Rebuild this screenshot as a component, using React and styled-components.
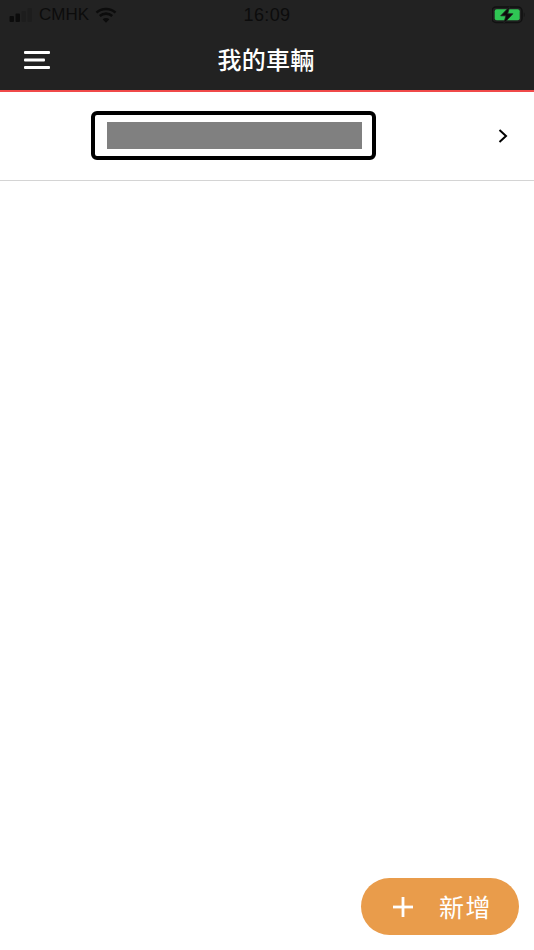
import React from 'react';
import styled, { createGlobalStyle } from 'styled-components';

const GlobalStyle = createGlobalStyle`
  html, body {
    margin: 0;
    padding: 0;
    background: #fff;
  }
  * {
    box-sizing: border-box;
  }
`;

const Page = styled.div`
  position: relative;
  width: 534px;
  height: 950px;
  overflow: hidden;
  background: #fff;
  font-family: "Liberation Sans", "Noto Sans CJK TC", sans-serif;
`;

const Header = styled.header`
  height: 92px;
  background: #222222;
  border-bottom: 2px solid #f04a4a;
`;

const StatusBar = styled.div`
  display: grid;
  grid-template-columns: 1fr auto 1fr;
  align-items: center;
  height: 30px;
  padding: 0 9px;
  color: #0c0c0c;
`;

const StatusLeft = styled.div`
  display: flex;
  align-items: center;
  gap: 6px;
  font-size: 17px;
`;

const Time = styled.div`
  font-size: 18px;
  letter-spacing: 0.4px;
`;

const StatusRight = styled.div`
  display: flex;
  justify-content: flex-end;
`;

const NavBar = styled.nav`
  display: grid;
  grid-template-columns: 1fr auto 1fr;
  align-items: center;
  height: 60px;
  padding: 0 26px 0 24px;
`;

const MenuButton = styled.button`
  display: flex;
  width: 28px;
  padding: 0;
  border: 0;
  background: none;
`;

const Title = styled.h1`
  margin: 0 0 4px;
  color: #fff;
  font-family: "Noto Sans CJK TC", sans-serif;
  font-size: 24px;
  font-weight: 500;
  letter-spacing: 0.2px;
`;

const VehicleRow = styled.div`
  display: flex;
  align-items: center;
  height: 89px;
  padding: 0 26px 1px 91px;
  border-bottom: 1px solid #d4d4d4;
`;

const PlateFrame = styled.div`
  display: flex;
  align-items: center;
  width: 285px;
  height: 49px;
  margin-right: auto;
  padding-left: 12px;
  border: 4px solid #000;
  border-radius: 6px;
`;

const PlateMask = styled.div`
  width: 255px;
  height: 27px;
  background: #808080;
`;

const AddButton = styled.button`
  position: absolute;
  right: 15px;
  bottom: 15px;
  display: flex;
  align-items: center;
  gap: 26px;
  width: 158px;
  height: 57px;
  padding: 0 0 0 32px;
  border: 0;
  border-radius: 29px;
  background: #e99c4b;
  color: #fff;
  font-family: "Noto Sans CJK TC", sans-serif;
  font-size: 25px;
  letter-spacing: 1.5px;
`;

const AddLabel = styled.span`
  padding-bottom: 2px;
`;

const SignalIcon = () => (
  <svg width="24" height="16" viewBox="0 0 24 16" fill="#0c0c0c">
    <rect x="0.5" y="9" width="4.5" height="6" rx="1" />
    <rect x="6.500" y="6.500" width="4.500" height="8.500" rx="1" />
    <rect x="12.500" y="4" width="4.500" height="11" rx="1" fillOpacity="0.18" />
    <rect x="18.500" y="1" width="4.500" height="14" rx="1" fillOpacity="0.18" />
  </svg>
);

const WifiIcon = () => (
  <svg width="22" height="16" viewBox="0 0 22 16" fill="none" stroke="#0c0c0c" strokeWidth="2.6">
    <path d="M1.500 5.600C6.800 .8 15.200 .8 20.500 5.600" />
    <path d="M4.800 9C8.400 5.800 13.600 5.800 17.200 9" />
    <path d="M11 15.800 7.600 12.300C9.600 10.700 12.400 10.700 14.400 12.300Z" fill="#0c0c0c" stroke="none" />
  </svg>
);

const BatteryIcon = () => (
  <svg width="33" height="18" viewBox="0.800 0 33 18">
    <rect x="0.800" y="1" width="30" height="15.500" rx="4" fill="none" stroke="#111" strokeWidth="1.500" />
    <rect x="3.500" y="3.200" width="25" height="11" rx="2" fill="#2fc654" />
    <path d="M32.600 6.500c1 .4 1 4.100 0 4.500z" fill="#111" />
    <path d="M18.500 0.500 9.500 9.800h5.200l-2.200 7.700 9.200-9.700h-5.300z" fill="#0c0c0c" stroke="#222" strokeWidth="0.800" />
  </svg>
);

const MenuIcon = () => (
  <svg width="28" height="18" viewBox="0 0 28 18" fill="#fff">
    <rect x="0" y="0" width="26" height="3" rx="1" />
    <rect x="0" y="7.500" width="21" height="3" rx="1" />
    <rect x="0" y="15" width="26" height="3" rx="1" />
  </svg>
);

const ChevronIcon = () => (
  <svg width="10" height="14" viewBox="0 0 10 14" fill="none" stroke="#000" strokeWidth="2">
    <path d="M1.500 1 8 7 1.500 13" />
  </svg>
);

const PlusIcon = () => (
  <svg width="20" height="20" viewBox="0 0 20 20" fill="#fff">
    <rect x="0" y="8.600" width="20" height="2.800" />
    <rect x="8.600" y="0" width="2.800" height="20" />
  </svg>
);

const App = () => {
  return (
    <Page>
      <GlobalStyle />
      <Header>
        <StatusBar>
          <StatusLeft>
            <SignalIcon />
            <span>CMHK</span>
            <WifiIcon />
          </StatusLeft>
          <Time>16:09</Time>
          <StatusRight>
            <BatteryIcon />
          </StatusRight>
        </StatusBar>
        <NavBar>
          <MenuButton aria-label="menu">
            <MenuIcon />
          </MenuButton>
          <Title>我的車輛</Title>
        </NavBar>
      </Header>

      <VehicleRow>
        <PlateFrame>
          <PlateMask />
        </PlateFrame>
        <ChevronIcon />
      </VehicleRow>

      <AddButton>
        <PlusIcon />
        <AddLabel>新增</AddLabel>
      </AddButton>
    </Page>
  );
};

export default App;
